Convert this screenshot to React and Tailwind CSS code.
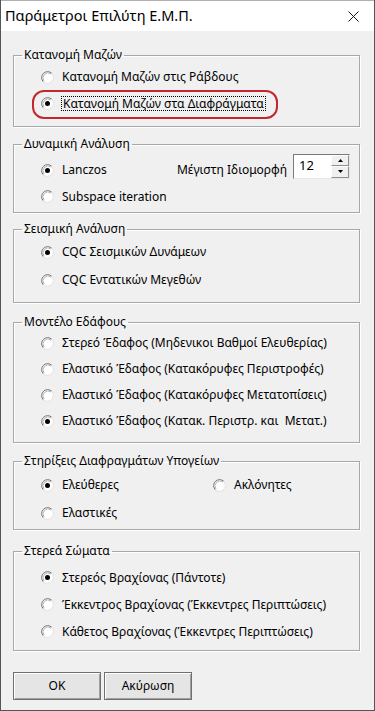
import React from "react";

function Radio({ checked }) {
  return (
    <svg width="13" height="13" viewBox="0 0 13 13" className="shrink-0">
      <circle cx="6.5" cy="6.5" r="6" fill="#fff" />
      <path d="M2.26 10.74 A6 6 0 0 1 10.74 2.26" stroke="#707070" strokeWidth="1" fill="none" />
      <path d="M10.74 2.26 A6 6 0 0 1 2.26 10.74" stroke="#e0e0e0" strokeWidth="1" fill="none" />
      <path d="M3.0 10.0 A5 5 0 0 1 10.0 3.0" stroke="#b4b4b4" strokeWidth="1" fill="none" />
      {checked && <circle cx="6.5" cy="6.5" r="2.5" fill="#000" />}
    </svg>
  );
}

function Option({ checked, children, h, focus }) {
  return (
    <div className={`flex items-center gap-[8px] ${h}`}>
      <Radio checked={checked} />
      {focus ? (
        <span className="outline outline-1 outline-dotted outline-black px-[1px] leading-[13px]">{children}</span>
      ) : (
        <span>{children}</span>
      )}
    </div>
  );
}

function Group({ title, className, children }) {
  return (
    <fieldset
      className={`border border-[#a8a8a8] shadow-[1px_1px_0_#ffffff,inset_1px_1px_0_#ffffff] ${className}`}
    >
      <legend className="ml-[8px] px-[2px] text-[12px] leading-[16px]">{title}</legend>
      {children}
    </fieldset>
  );
}

export default function App() {
  return (
    <div
      className="relative w-[375px] h-[711px] bg-[#f0f0f0] border-x border-b border-[#555555] flex flex-col text-[12px] text-black"
      style={{ fontFamily: '"Noto Sans", "Liberation Sans", Arial, sans-serif' }}
    >
      {/* Title bar */}
      <div className="h-[31px] bg-white flex items-center justify-between pl-[4px] pr-[15px] border-t border-[#b0b0b0] shrink-0">
        <span className="text-[14.5px]">Παράμετροι Επιλύτη Ε.Μ.Π.</span>
        <svg width="11" height="11" viewBox="0 0 11 11">
          <path d="M0.5 0.5 L10.5 10.5 M10.5 0.5 L0.5 10.5" stroke="#111" strokeWidth="1" />
        </svg>
      </div>

      <div className="flex flex-col pl-[12px] pr-[14px]">
        <Group title="Κατανομή Μαζών" className="mt-[16px] h-[80px]">
          <div className="pl-[27px] pt-[1px] flex flex-col">
            <Option h="h-[26px]">Κατανομή Μαζών στις Ράβδους</Option>
            <Option h="h-[26px]" checked focus>Κατανομή Μαζών στα Διαφράγματα</Option>
          </div>
        </Group>

        <Group title="Δυναμική Ανάλυση" className="mt-[9px] h-[77px]">
          <div className="pl-[27px] pr-[9px] pt-[5px] flex flex-col">
            <div className="flex items-center justify-between h-[26px]">
              <Option h="h-[26px]" checked>Lanczos</Option>
              <div className="flex items-center gap-[6px]">
                <span>Μέγιστη Ιδιομορφή</span>
                <div className="flex -translate-y-[4px] h-[25px] w-[57px] bg-white border border-t-[#7a7a7a] border-l-[#7a7a7a] border-r-[#e8e8e8] border-b-[#e8e8e8]">
                  <div className="flex-1 flex items-center pl-[5px] text-[13px]">12</div>
                  <div className="w-[18px] flex flex-col">
                    <div className="flex-1 bg-[#f0f0f0] border border-t-[#ffffff] border-l-[#ffffff] border-r-[#909090] border-b-[#909090] flex items-center justify-center">
                      <svg width="5" height="3" viewBox="0 0 5 3"><path d="M2.5 0 L5 3 L0 3 Z" fill="#000" /></svg>
                    </div>
                    <div className="flex-1 bg-[#f0f0f0] border border-t-[#ffffff] border-l-[#ffffff] border-r-[#909090] border-b-[#909090] flex items-center justify-center">
                      <svg width="5" height="3" viewBox="0 0 5 3"><path d="M0 0 L5 0 L2.5 3 Z" fill="#000" /></svg>
                    </div>
                  </div>
                </div>
              </div>
            </div>
            <Option h="h-[27px]">Subspace iteration</Option>
          </div>
        </Group>

        <Group title="Σεισμική Ανάλυση" className="mt-[8px] h-[82px]">
          <div className="pl-[27px] pt-[1px] flex flex-col">
            <Option h="h-[28px]" checked>CQC Σεισμικών Δυνάμεων</Option>
            <Option h="h-[28px]">CQC Εντατικών Μεγεθών</Option>
          </div>
        </Group>

        <Group title="Μοντέλο Εδάφους" className="mt-[11px] h-[129px]">
          <div className="pl-[27px] pt-[0px] flex flex-col">
            <Option h="h-[26px]">Στερεό Έδαφος (Μηδενικοι Βαθμοί Ελευθερίας)</Option>
            <Option h="h-[26px]">Ελαστικό Έδαφος (Κατακόρυφες Περιστροφές)</Option>
            <Option h="h-[26px]">Ελαστικό Έδαφος (Κατακόρυφες Μετατοπίσεις)</Option>
            <Option h="h-[26px]" checked>Ελαστικό Έδαφος (Κατακ. Περιστρ. και&nbsp; Μετατ.)</Option>
          </div>
        </Group>

        <Group title="Στηρίξεις Διαφραγμάτων Υπογείων" className="mt-[10px] h-[77px]">
          <div className="pl-[27px] pt-[2px] flex flex-col">
            <div className="flex items-center h-[28px]">
              <div className="w-[172px]">
                <Option h="h-[28px]" checked>Ελεύθερες</Option>
              </div>
              <Option h="h-[28px]">Ακλόνητες</Option>
            </div>
            <Option h="h-[28px]">Ελαστικές</Option>
          </div>
        </Group>

        <Group title="Στερεά Σώματα" className="mt-[13px] h-[108px]">
          <div className="pl-[27px] pt-[5px] flex flex-col">
            <Option h="h-[27px]" checked>Στερεός Βραχίονας (Πάντοτε)</Option>
            <Option h="h-[27px]">Έκκεντρος Βραχίονας (Έκκεντρες Περιπτώσεις)</Option>
            <Option h="h-[27px]">Κάθετος Βραχίονας (Έκκεντρες Περιπτώσεις)</Option>
          </div>
        </Group>

        <div className="flex gap-[3px] mt-[21px]">
          <button className="w-[88px] h-[28px] bg-[#e5e5e5] border border-[#707070] shadow-[inset_1px_1px_0_#ffffff,inset_-1px_-1px_0_#a0a0a0] text-[12px]">
            OK
          </button>
          <button className="w-[88px] h-[28px] bg-[#e5e5e5] border border-[#707070] shadow-[inset_1px_1px_0_#ffffff,inset_-1px_-1px_0_#a0a0a0] text-[12px]">
            Ακύρωση
          </button>
        </div>
      </div>

      {/* Red annotation */}
      <div className="absolute left-[31px] top-[90px] w-[246px] h-[29px] border-2 border-[#c4262e] rounded-[12px] pointer-events-none" />
    </div>
  );
}
